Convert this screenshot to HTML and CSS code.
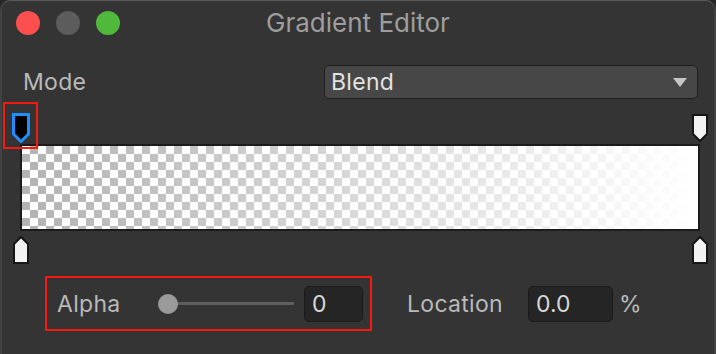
FILE: index.html
```html
<!DOCTYPE html>
<html lang="en">
<head>
    <meta charset="UTF-8">
    <meta name="viewport" content="width=device-width, initial-scale=1.0">
    <title>Gradient Editor</title>
    <link rel="stylesheet" href="styles.css">
</head>
<body>
    <div class="window">
        <div class="titlebar">
            <div class="lights">
                <span class="light light-close"></span>
                <span class="light light-min"></span>
                <span class="light light-max"></span>
            </div>
            <span class="title">Gradient Editor</span>
            <span></span>
        </div>

        <div class="mode-row">
            <span class="label">Mode</span>
            <div class="dropdown">
                <span>Blend</span>
                <span class="caret"></span>
            </div>
        </div>

        <!-- alpha stops -->
        <div class="stops stops-top">
            <div class="stop selected" style="left: 0%;">
                <svg width="18" height="30" viewBox="0 0 18 30">
                    <path d="M1.5 1.5 H16.5 V21 L9 28.5 L1.5 21 Z" fill="#000" stroke="#1e8fff" stroke-width="3"/>
                </svg>
                <div class="highlight"></div>
            </div>
            <div class="stop" style="left: 100%;">
                <svg width="18" height="30" viewBox="0 0 18 30">
                    <path d="M2 2 H16 V21 L9 28 L2 21 Z" fill="#f2f2f2" stroke="#161616" stroke-width="2"/>
                </svg>
            </div>
        </div>

        <div class="gradient">
            <div class="gradient-fill"></div>
        </div>

        <!-- color stops -->
        <div class="stops stops-bottom">
            <div class="stop" style="left: 0%;">
                <svg width="18" height="30" viewBox="0 0 18 30">
                    <path d="M2 28 H16 V9 L9 2 L2 9 Z" fill="#f2f2f2" stroke="#161616" stroke-width="2"/>
                </svg>
            </div>
            <div class="stop" style="left: 100%;">
                <svg width="18" height="30" viewBox="0 0 18 30">
                    <path d="M2 28 H16 V9 L9 2 L2 9 Z" fill="#f2f2f2" stroke="#161616" stroke-width="2"/>
                </svg>
            </div>
        </div>

        <div class="fields">
            <div class="alpha-group">
                <span class="label">Alpha</span>
                <div class="slider"><span class="knob"></span></div>
                <div class="field field-alpha">0</div>
            </div>
            <span class="label label-location">Location</span>
            <div class="field field-location">0.0</div>
            <span class="label percent">%</span>
        </div>
    </div>
</body>
</html>
```

FILE: styles.css
```css
/* Halaman */
body {
    margin: 0;
    background-color: #262626;
    font-family: 'Inter', 'Noto Sans', sans-serif;
}

.window {
    box-sizing: border-box;
    width: 716px;
    height: 354px;
    background-color: #343434;
    border: 1px solid #5a5a5a;
    border-left: 2px solid #424242;
    border-right: 2px solid #424242;
    border-bottom: none;
    border-radius: 10px 10px 0 0;
    overflow: hidden;
}

/* Title bar */
.titlebar {
    display: grid;
    grid-template-columns: 1fr auto 1fr;
    align-items: center;
    height: 43px;
    padding: 0 14px;
}

.lights {
    display: flex;
    gap: 16px;
}

.light {
    width: 24px;
    height: 24px;
    border-radius: 50%;
}

.light-close { background-color: #fe4f4f; }
.light-min { background-color: #5c5c5c; }
.light-max { background-color: #50b93b; }

.title {
    color: #9e9e9e;
    font-size: 26px;
}

.label {
    color: #b9b9b9;
    font-size: 23px;
    letter-spacing: 0.3px;
}

/* Mode */
.mode-row {
    display: grid;
    grid-template-columns: 301px 1fr;
    align-items: center;
    margin-top: 21px;
    padding: 0 16px 0 21px;
}

.dropdown {
    box-sizing: border-box;
    height: 34px;
    display: flex;
    align-items: center;
    justify-content: space-between;
    padding: 0 10px 0 6px;
    background-color: #474747;
    border: 1px solid #202020;
    border-radius: 5px;
    color: #e2e2e2;
    font-size: 23px;
    letter-spacing: 0.3px;
}

.caret {
    width: 0;
    height: 0;
    border-left: 7px solid transparent;
    border-right: 7px solid transparent;
    border-top: 9px solid #c6c6c6;
}

/* Stops */
.stops {
    position: relative;
    margin: 0 14px 0 19px;
}

.stops-top {
    height: 31px;
    margin-top: 14px;
}

.stops-bottom {
    height: 36px;
}

.stop {
    position: absolute;
    top: 0;
    width: 18px;
    height: 30px;
    margin-left: -9px;
}

.stops-bottom .stop {
    top: 4px;
}

.stop svg {
    display: block;
}

.highlight {
    position: absolute;
    top: -11px;
    left: -9px;
    right: -8px;
    bottom: -6px;
    border: 2px solid #f5190f;
}

/* Gradient bar */
.gradient {
    height: 83px;
    margin: 0 14px 0 18px;
    border: 2px solid #1b1b1b;
    background-color: #fff;
    background-image: repeating-conic-gradient(#b3b3b3 0 25%, #ffffff 0 50%);
    background-size: 16px 16px;
}

.gradient-fill {
    height: 100%;
    background: linear-gradient(to right, rgba(255, 255, 255, 0), #ffffff);
}

/* Alpha / Location */
.fields {
    display: flex;
    align-items: center;
    margin-top: 9px;
    padding-left: 43px;
}

.alpha-group {
    display: flex;
    align-items: center;
    width: 323px;
    height: 51px;
    box-sizing: content-box;
    padding: 0;
    border: 2px solid #f5190f;
}

.alpha-group .label {
    margin-left: 10px;
    width: 101px;
}

.slider {
    width: 136px;
    height: 20px;
    background: linear-gradient(#5e5e5e, #5e5e5e) no-repeat 10px center / 126px 3px;
}

.knob {
    display: block;
    width: 20px;
    height: 20px;
    border-radius: 50%;
    background-color: #9a9a9a;
}

.field {
    box-sizing: border-box;
    height: 36px;
    display: flex;
    align-items: center;
    padding-left: 7px;
    background-color: #252525;
    border: 1px solid #1b1b1b;
    border-radius: 5px;
    color: #d8d8d8;
    font-size: 23px;
}

.field-alpha {
    width: 59px;
    margin-left: 10px;
}

.label-location {
    margin-left: 35px;
    width: 121px;
}

.field-location {
    width: 85px;
}

.percent {
    margin-left: 6px;
}
```
